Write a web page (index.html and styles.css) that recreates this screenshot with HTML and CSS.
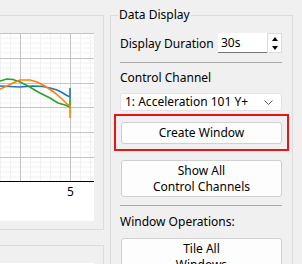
FILE: index.html
```html
<!DOCTYPE html>
<html>
<head>
<meta charset="utf-8">
<link rel="stylesheet" href="styles.css">
</head>
<body>
<div class="app">
  <div class="left">
    <section class="group g1">
      <div class="chart">
        <svg class="plot" width="113" height="188" viewBox="-19 33 113 188">
          <g class="minor">
            <line x1="-19" y1="38" x2="94" y2="38"/><line x1="-19" y1="43" x2="94" y2="43"/><line x1="-19" y1="48" x2="94" y2="48"/><line x1="-19" y1="53" x2="94" y2="53"/>
            <line x1="-19" y1="63" x2="94" y2="63"/><line x1="-19" y1="68" x2="94" y2="68"/><line x1="-19" y1="73" x2="94" y2="73"/><line x1="-19" y1="78" x2="94" y2="78"/>
            <line x1="-19" y1="88" x2="94" y2="88"/><line x1="-19" y1="93" x2="94" y2="93"/><line x1="-19" y1="98" x2="94" y2="98"/><line x1="-19" y1="103" x2="94" y2="103"/>
            <line x1="-19" y1="112" x2="94" y2="112"/><line x1="-19" y1="117" x2="94" y2="117"/><line x1="-19" y1="122" x2="94" y2="122"/><line x1="-19" y1="127" x2="94" y2="127"/>
            <line x1="-19" y1="137" x2="94" y2="137"/><line x1="-19" y1="142" x2="94" y2="142"/><line x1="-19" y1="147" x2="94" y2="147"/><line x1="-19" y1="152" x2="94" y2="152"/>
            <line x1="-19" y1="162" x2="94" y2="162"/><line x1="-19" y1="167" x2="94" y2="167"/><line x1="-19" y1="172" x2="94" y2="172"/><line x1="-19" y1="177" x2="94" y2="177"/>
            <line x1="0.5" y1="33" x2="0.5" y2="181"/><line x1="10.5" y1="33" x2="10.5" y2="181"/><line x1="30.5" y1="33" x2="30.5" y2="181"/><line x1="40.5" y1="33" x2="40.5" y2="181"/><line x1="50.5" y1="33" x2="50.5" y2="181"/><line x1="60.5" y1="33" x2="60.5" y2="181"/><line x1="80.5" y1="33" x2="80.5" y2="181"/><line x1="90.5" y1="33" x2="90.5" y2="181"/>
          </g>
          <g class="major">
            <line x1="-19" y1="33.5" x2="94" y2="33.5"/><line x1="-19" y1="58.5" x2="94" y2="58.5"/><line x1="-19" y1="83.5" x2="94" y2="83.5"/><line x1="-19" y1="107.5" x2="94" y2="107.5"/><line x1="-19" y1="132.5" x2="94" y2="132.5"/><line x1="-19" y1="157.5" x2="94" y2="157.5"/>
            <line x1="20.5" y1="33" x2="20.5" y2="181"/><line x1="70.5" y1="33" x2="70.5" y2="181"/>
          </g>
          <line class="axis" x1="-19" y1="181.5" x2="94" y2="181.5"/>
          <polyline class="tr blue" points="-19,86 0,86 10,86.5 20,87 33,86 43,86.5 50,88 57,90 62,92.5 66,95 70,97 70,88"/>
          <polyline class="tr green" points="-19,88 0,81 7,79 13,79.5 20,82 30,87 33,89 40,93 50,98 58,103 65,105 70,107 70,98 70,108"/>
          <polyline class="tr orange" points="-19,92 0,89 7,86 13,83 20,80 30,80 37,82 43,85 48,88 55,93 62,99 67,104 70,106 70,118"/>
          <text class="tick" x="70.5" y="196">5</text>
        </svg>
      </div>
    </section>
    <section class="group g2">
      <div class="chart2"></div>
    </section>
  </div>

  <fieldset class="panel">
    <legend>Data Display</legend>
    <div class="row">
      <span class="lbl">Display Duration</span>
      <div class="spin">
        <div class="spin-field">30s</div>
        <div class="spin-btns">
          <span class="sb up"></span>
          <span class="sb down"></span>
        </div>
      </div>
    </div>
    <div class="sep"></div>
    <div class="title">Control Channel</div>
    <div class="combo">
      <span>1: Acceleration 101 Y+</span>
      <svg class="chev" width="9" height="5" viewBox="0 0 9 5"><polyline points="0.5,0.5 4.5,4.5 8.5,0.5"/></svg>
    </div>
    <div class="mark">
      <div class="btn">Create Window</div>
    </div>
    <div class="btn tall">Show All<br>Control Channels</div>
    <div class="sep sep2"></div>
    <div class="title ops">Window Operations:</div>
    <div class="btn tall tile">Tile All<br>Windows</div>
  </fieldset>
</div>
</body>
</html>
```

FILE: styles.css
```css
html, body {
  margin: 0;
  padding: 0;
}
body {
  background: #f0f0f0;
  font-family: "Noto Sans", "Open Sans", sans-serif;
  font-size: 12px;
  line-height: 16px;
  color: #000;
  width: 302px;
  height: 264px;
  overflow: hidden;
}
.app {
  display: flex;
  align-items: flex-start;
}
.left {
  flex: none;
  width: 104px;
  margin-top: 15px;
}
.group {
  margin-left: -20px;
  border: 1px solid #dcdcdc;
  padding: 17px 9px 8px 0;
}
.chart {
  height: 188px;
  background: #fff;
}
.plot {
  display: block;
}
.minor line {
  stroke: #f1f1f1;
  stroke-width: 1;
}
.major line {
  stroke: #c4c4c4;
  stroke-width: 1;
}
.axis {
  stroke: #000;
  stroke-width: 1;
}
.tr {
  fill: none;
  stroke-width: 1.6;
  stroke-linejoin: miter;
}
.blue { stroke: #1f77b4; }
.green { stroke: #2ca02c; }
.orange { stroke: #ff7f0e; }
.tick {
  font-family: "Noto Sans", sans-serif;
  font-size: 12px;
  text-anchor: middle;
  fill: #000;
}
.g2 {
  margin-top: 15px;
  padding-top: 17px;
  padding-bottom: 0;
}
.chart2 {
  height: 40px;
  background: #fff;
}

.panel {
  flex: none;
  margin: 7px 0 0 6px;
  border: 1px solid #dcdcdc;
  padding: 0 10px 40px 9px;
  width: 162px;
  min-width: 0;
}
.panel legend {
  padding: 0 1px;
  margin-left: -2px;
  line-height: 16px;
}
.row {
  display: flex;
  align-items: center;
  justify-content: space-between;
  margin-top: 10px;
  height: 20px;
}
.lbl {
  padding-top: 1px;
}
.spin {
  display: flex;
  width: 64px;
  height: 20px;
}
.spin-field {
  flex: 1;
  background: #fff;
  border-bottom: 1px solid #767676;
  padding-left: 3px;
  line-height: 20px;
}
.spin-btns {
  width: 14px;
  display: flex;
  flex-direction: column;
  border: 1px solid #dcdcdc;
  border-left: none;
  background: #fdfdfd;
}
.sb {
  flex: 1;
  display: flex;
  align-items: center;
  justify-content: center;
  border-left: 1px solid #dcdcdc;
}
.sb::before {
  content: "";
  border-left: 3.5px solid transparent;
  border-right: 3.5px solid transparent;
}
.up::before {
  border-bottom: 4px solid #000;
}
.down::before {
  border-top: 4px solid #000;
}
.sep {
  height: 1px;
  background: #a9a9a9;
  margin-top: 9px;
}
.title {
  margin-top: 7px;
}
.combo {
  margin-top: 7px;
  height: 16px;
  background: #fff;
  border: 1px solid #e3e3e3;
  border-radius: 3px;
  display: flex;
  align-items: center;
  justify-content: space-between;
  padding: 0 8px 0 4px;
}
.chev {
  display: block;
}
.chev polyline {
  fill: none;
  stroke: #606060;
  stroke-width: 1;
}
.mark {
  margin: 3px -7px 0 -6px;
  border: 2px solid #e8141c;
  padding: 6px 5px 5px 5px;
}
.btn {
  height: 20px;
  background: #fdfdfd;
  border: 1px solid #d0d0d0;
  border-radius: 3px;
  text-align: center;
  line-height: 20px;
  margin-left: 1px;
}
.mark .btn {
  margin-left: 0;
}
.tall {
  height: auto;
  line-height: 16px;
  padding: 2px 0 1px;
  margin-top: 9px;
}
.sep2 {
  margin-top: 8px;
}
.ops {
  margin-top: 8px;
}
.tile {
  margin-top: 8px;
}
```
